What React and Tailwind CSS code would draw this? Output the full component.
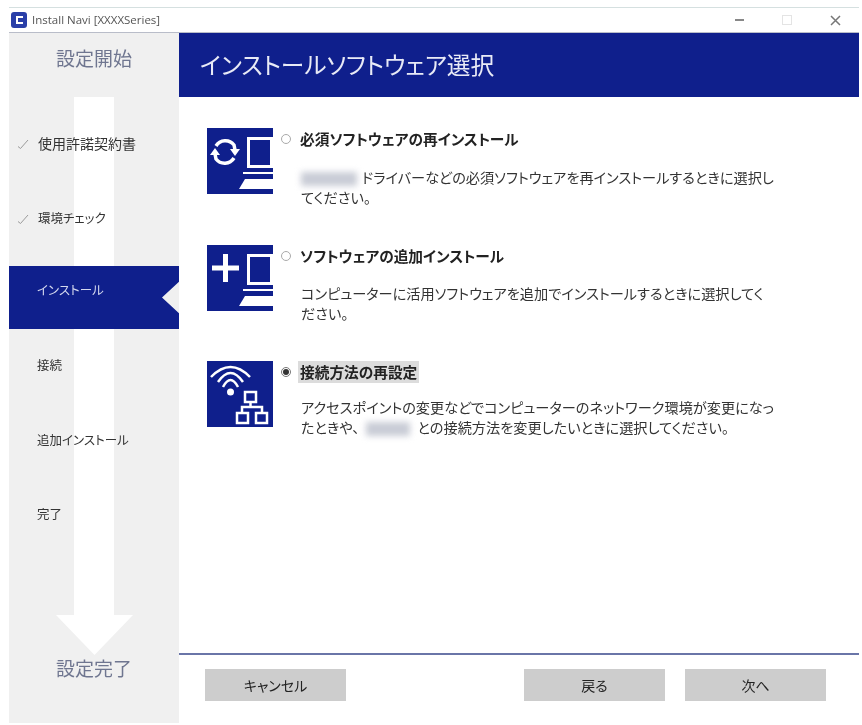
import React from "react";

const jp = "[font-family:'Noto_Sans_CJK_JP','Noto_Sans',sans-serif] [font-feature-settings:'palt']";

const steps = [
  { label: "使用許諾契約書", size: "text-[14px]", h: "h-[75px]" },
  { label: "環境チェック", size: "text-[12.5px]", h: "h-[48px]" },
];

const Check = () => (
  <svg width="12" height="10" viewBox="0 0 12 10" className="shrink-0" fill="none">
    <path d="M1 7.5 L3.5 9.5 L11 1" stroke="#9a9a9a" strokeWidth="1" />
  </svg>
);

// パソコンの絵（3つのアイコンのうち2つで共通）
const Monitor = () => (
  <>
    <rect x="41.5" y="10.5" width="23" height="28" fill="none" stroke="#fff" strokeWidth="3" />
    <rect x="36" y="44" width="30" height="2" fill="#fff" />
    <path d="M32 61 L38 51 L66 51 L66 61 Z" fill="#fff" />
  </>
);

const RefreshIcon = () => (
  <svg width="66" height="66" viewBox="0 0 66 66" className="shrink-0 bg-[#0f1f8c]" fill="none">
    <Monitor />
    <path d="M9 18 A11 11 0 0 1 27 17 L28 22" stroke="#fff" strokeWidth="3.5" />
    <path d="M23 21 L33 21 L28 28 Z" fill="#fff" />
    <path d="M27 30 A11 11 0 0 1 9 31 L8 26" stroke="#fff" strokeWidth="3.5" />
    <path d="M3 27 L13 27 L8 20 Z" fill="#fff" />
  </svg>
);

const PlusIcon = () => (
  <svg width="66" height="66" viewBox="0 0 66 66" className="shrink-0 bg-[#0f1f8c]" fill="none">
    <Monitor />
    <path d="M5 23 H32 M18.5 9 V37" stroke="#fff" strokeWidth="5" />
  </svg>
);

const NetworkIcon = () => (
  <svg width="66" height="66" viewBox="0 0 66 66" className="shrink-0 bg-[#0f1f8c]" fill="none" stroke="#fff">
    <path d="M4 16 Q23.5 -4 43 16" strokeWidth="2.5" />
    <path d="M11 21 Q23.5 3 36 21" strokeWidth="2.5" />
    <path d="M16 26 Q23.5 12 31 26" strokeWidth="2.5" />
    <circle cx="23.5" cy="31" r="3.5" fill="#fff" stroke="none" />
    <rect x="38" y="31" width="11" height="10" strokeWidth="2.5" />
    <path d="M43.5 41 V46 M35 52 V46 H55 V52" strokeWidth="2.5" />
    <rect x="30" y="52" width="11" height="10" strokeWidth="2.5" />
    <rect x="49" y="52" width="11" height="10" strokeWidth="2.5" />
  </svg>
);

const Blurred = ({ className }) => (
  <span className={`inline-block h-[14px] align-middle bg-[#c9ccd6] blur-[3px] ${className}`} />
);

const Option = ({ icon, title, selected, gap, children }) => (
  <div className="flex h-[116.5px] pl-[28px]">
    {icon}
    <div className="ml-[8px]">
      <div className="flex items-center h-[22px]">
        <span
          className={`w-[10px] h-[10px] rounded-full border flex items-center justify-center bg-white ${
            selected ? "border-[#777]" : "border-[#aaa]"
          }`}
        >
          {selected && <span className="w-[6px] h-[6px] rounded-full bg-[#333]" />}
        </span>
        <span
          className={`ml-[7px] px-[2px] text-[14.7px] font-bold text-[#222] leading-[22px] ${
            selected ? "bg-[#dcdcdc]" : ""
          }`}
        >
          {title}
        </span>
      </div>
      <p className={`${gap} ml-[20px] w-[490px] text-[14.2px] leading-[20px] text-[#333]`}>{children}</p>
    </div>
  </div>
);

const Button = ({ children }) => (
  <button className="w-[141px] h-[32px] bg-[#cdcdcd] text-[14px] text-[#222]">{children}</button>
);

export default function App() {
  return (
    <div className={`w-[862px] h-[725px] bg-white pt-[7px] pl-[9px] blur-[0.7px] ${jp}`}>
      <div className="w-[850px] h-[716px] flex flex-col border-t border-[#d5e0e0]">
        {/* タイトルバー */}
        <div className="h-[25px] shrink-0 flex items-center pl-[2px] border-b border-[#b9bdc9]">
          <span className="w-[16px] h-[16px] rounded-[3px] bg-[#2a3fa8] flex items-center justify-center">
            <span className="w-[7px] h-[8px] border-2 border-r-0 border-white" />
          </span>
          <span className="ml-[5px] text-[11.5px] text-[#555] [font-family:'Open_Sans',sans-serif]">
            Install Navi [XXXXSeries]
          </span>
          <div className="ml-auto flex items-center gap-[38px] pr-[18px]">
            <span className="w-[9px] h-[2px] bg-[#888]" />
            <span className="w-[10px] h-[10px] border border-[#e4e4e4]" />
            <svg width="11" height="11" viewBox="0 0 11 11">
              <path d="M1 1 L10 10 M10 1 L1 10" stroke="#777" strokeWidth="1.5" />
            </svg>
          </div>
        </div>
        <div className="flex flex-1 min-h-0">
          {/* 左の進行表示 */}
          <div className="relative w-[170px] shrink-0 bg-[#f0f0f0]">
            <div className="absolute left-[65px] top-[64px] w-[40px] h-[520px] bg-white" />
            <div className="absolute left-[47px] top-[582px] w-[77px] h-[40px] bg-white [clip-path:polygon(0_0,100%_0,50%_100%)]" />
            <div className="relative h-full flex flex-col">
              <div className="h-[50px] flex items-center justify-center text-[19px] text-[#6f7690]">設定開始</div>
              <div className="h-[183px] pt-[50px]">
                {steps.map((s) => (
                  <div key={s.label} className={`flex items-start gap-[9px] pl-[8px] text-[#333] leading-[20px] ${s.size} ${s.h}`}>
                    <span className="mt-[6px]"><Check /></span>
                    {s.label}
                  </div>
                ))}
              </div>
              <div className="h-[63px] bg-[#0f1f8c] flex items-center pl-[28px] pb-[14px] text-[12.5px] text-[#d5d9ee] [clip-path:polygon(0_0,100%_0,100%_25%,90%_50%,100%_75%,100%_100%,0_100%)]">
                インストール
              </div>
              <div className="pl-[28px] pt-[26px] text-[12.5px] text-[#333] leading-[20px] flex flex-col gap-[54.5px]">
                <span>接続</span>
                <span>追加インストール</span>
                <span>完了</span>
              </div>
              <div className="mt-auto h-[72px] pt-[3px] flex justify-center text-[19px] text-[#6f7690]">設定完了</div>
            </div>
          </div>
          {/* 右側の本体 */}
          <div className="flex-1 flex flex-col min-w-0">
            <div className="h-[64px] shrink-0 bg-[#0f1f8c] flex items-center pl-[21px] text-[23.7px] text-[#e8eaf6]">
              インストールソフトウェア選択
            </div>
            <div className="flex-1 pt-[31px]">
              <Option icon={<RefreshIcon />} title="必須ソフトウェアの再インストール" gap="mt-[17px]">
                <Blurred className="w-[56px] mr-[5px]" />
                ドライバーなどの必須ソフトウェアを再インストールするときに選択し
                <br />
                てください。
              </Option>
              <Option icon={<PlusIcon />} title="ソフトウェアの追加インストール" gap="mt-[16px]">
                コンピューターに活用ソフトウェアを追加でインストールするときに選択してく
                <br />
                ださい。
              </Option>
              <Option icon={<NetworkIcon />} title="接続方法の再設定" selected gap="mt-[14px]">
                アクセスポイントの変更などでコンピューターのネットワーク環境が変更になっ
                <br />
                たときや、
                <Blurred className="w-[44px] mx-[7px]" />
                との接続方法を変更したいときに選択してください。
              </Option>
            </div>
            <div className="h-[70px] shrink-0 border-t-2 border-[#6a75a8] flex items-start pt-[14px] pl-[26px]">
              <Button>キャンセル</Button>
              <div className="ml-auto flex gap-[20px] pr-[33px]">
                <Button>戻る</Button>
                <Button>次へ</Button>
              </div>
            </div>
          </div>
        </div>
      </div>
    </div>
  );
}
